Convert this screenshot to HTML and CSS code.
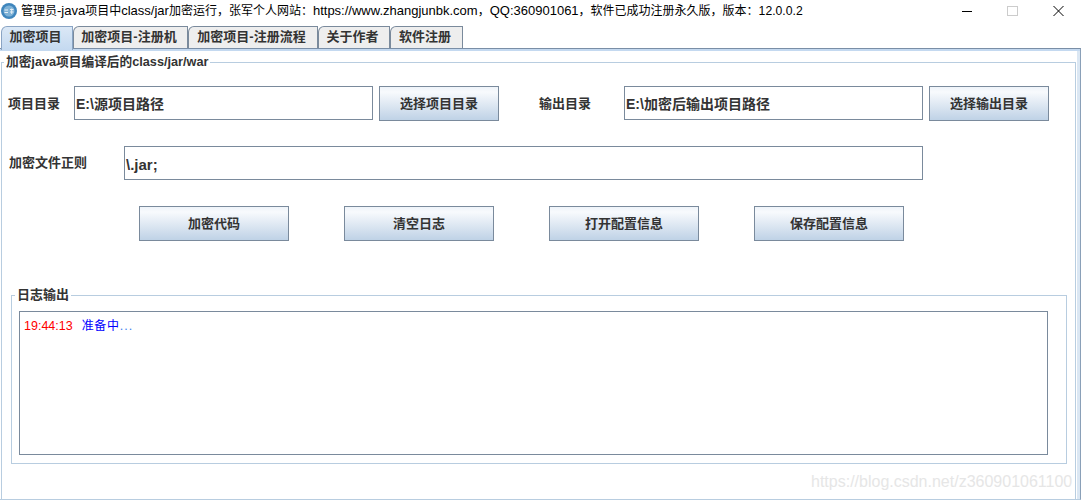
FILE: index.html
```html
<!DOCTYPE html>
<html lang="zh">
<head>
<meta charset="utf-8">
<title>管理员-java项目</title>
<link rel="stylesheet" href="styles.css">
</head>
<body>
<div class="window">
  <header class="titlebar">
    <svg class="app-icon" width="16" height="16" viewBox="0 0 16 16"><circle cx="8" cy="8" r="8" fill="#3f86bd"/><circle cx="8" cy="8" r="5.5" fill="#7fb2d6"/><path d="M3.5 7H7M3.5 9.5H7M9 6.5H12.5M9 9H12.5M10.7 5.5V11" stroke="#e6eff6" stroke-width="1"/></svg>
    <span class="title-text"><span class="cjk">管理员</span>-java<span class="cjk">项目中</span>class/jar<span class="cjk">加密运行，张军个人网站：</span>https://www.zhangjunbk.com<span class="cjk">，</span>QQ:360901061<span class="cjk">，软件已成功注册永久版，版本：</span><span class="ver">12.0.0.2</span></span>
    <div class="controls">
      <svg width="12" height="12" viewBox="0 0 12 12"><path d="M1 6.5H11" stroke="#000" stroke-width="1"/></svg>
      <svg width="12" height="12" viewBox="0 0 12 12"><rect x="0.5" y="1.5" width="10" height="9" fill="none" stroke="#ccc"/></svg>
      <svg width="12" height="12" viewBox="0 0 12 12"><path d="M0.5 1L10.5 11M10.5 1L0.5 11" stroke="#000" stroke-width="1"/></svg>
    </div>
  </header>
  <nav class="tabs">
    <div class="tab tab-active w72">加密项目</div>
    <div class="tab w115">加密项目-注册机</div>
    <div class="tab w130">加密项目-注册流程</div>
    <div class="tab w72">关于作者</div>
    <div class="tab w73">软件注册</div>
  </nav>
  <main class="panel">
    <fieldset class="group main-group">
      <legend>加密java项目编译后的class/jar/war</legend>
      <div class="row row-one">
        <label class="label label-a">项目目录</label>
        <div class="input input-a">E:\源项目路径</div>
        <button class="btn btn-s">选择项目目录</button>
        <label class="label label-b">输出目录</label>
        <div class="input input-a">E:\加密后输出项目路径</div>
        <button class="btn btn-s">选择输出目录</button>
      </div>
      <div class="row row-two">
        <label class="label label-c">加密文件正则</label>
        <div class="input input-c">\.jar;</div>
      </div>
      <div class="row row-three">
        <button class="btn btn-l">加密代码</button>
        <button class="btn btn-l">清空日志</button>
        <button class="btn btn-l">打开配置信息</button>
        <button class="btn btn-l">保存配置信息</button>
      </div>
      <fieldset class="group log-group">
        <legend>日志输出</legend>
        <div class="log">
          <span class="time">19:44:13</span><span class="msg">准备中</span><span class="dots">...</span>
        </div>
      </fieldset>
    </fieldset>
  </main>
  <div class="watermark">https://blog.csdn.net/z360901061100</div>
</div>
</body>
</html>
```

FILE: styles.css
```css
* { box-sizing: border-box; }
html, body { margin: 0; padding: 0; background: #fff; }
body { font-family: "Liberation Sans", "Noto Sans CJK SC", sans-serif; color: #333; }
.window { position: relative; width: 1081px; height: 500px; overflow: hidden; }
.titlebar { height: 26px; display: flex; align-items: flex-start; padding: 3px 0 0 1px; }
.app-icon { flex: none; }
.title-text { margin-left: 4px; font-size: 13px; line-height: 16px; color: #000; white-space: nowrap; }
.cjk { font-size: 12px; }
.ver { font-size: 12.2px; }
.controls { margin-left: auto; display: flex; gap: 34px; padding: 2px 16px 0 0; }
.tabs { display: flex; height: 22px; padding-left: 1px; position: relative; z-index: 1; }
.tab { height: 22px; border: 1px solid #7a8a9c; border-bottom: 0; border-top-left-radius: 6px; background: #eeeeee; font-size: 13px; font-weight: bold; color: #333; line-height: 20px; text-align: center; padding-right: 3px; }
.tab-active { background: linear-gradient(#dbe8f6, #c4d9f0); border-color: #8aa4c4; height: 24px; }
.w72 { width: 72px; }
.w73 { width: 73px; }
.w115 { width: 115px; }
.w130 { width: 130px; }
.panel { height: 452px; border-top: 1px solid #7a8ea6; border-right: 1px solid #8aa0b8; border-bottom: 1px solid #b8cde0; background: #fff; padding: 2px 4px 0 1px; box-shadow: inset 0 2px 0 #c4d9f0, inset -3px 0 0 #dbe7f3; }
.group { margin: 0; border: 1px solid #b8cde0; min-width: 0; }
.group legend { font-size: 12.7px; font-weight: bold; color: #333; padding: 0 2px; line-height: 16px; }
.main-group { height: 448px; padding: 0; margin-top: 3px; }
.main-group > legend { margin-left: 2px; }
.row { display: flex; align-items: flex-start; }
.row-one { padding-top: 16px; height: 75px; }
.label { font-size: 13px; font-weight: bold; color: #333; white-space: nowrap; line-height: 35px; }
.label-a { width: 72px; padding-left: 6px; }
.label-b { width: 85px; margin-left: 40px; }
.label-c { width: 122px; padding-left: 7px; line-height: 33px; }
.input { height: 34px; border: 1px solid #7a8a9c; font-size: 14px; font-weight: bold; color: #333; line-height: 35px; padding-left: 1px; white-space: nowrap; }
.input-a { width: 299px; }
.input-c { width: 799px; font-size: 15px; }
.btn { height: 35px; margin: 0; padding: 0 0 2px; border: 1px solid #7a8a9c; background: linear-gradient(#eef3f9 0%, #f8fafd 15%, #bfd2e6 100%); font-family: inherit; font-size: 13px; font-weight: bold; color: #333; }
.btn-s { width: 120px; margin-left: 6px; }
.row-two { height: 61px; padding-top: 1px; }
.row-three { height: 81px; padding-left: 137px; gap: 55px; }
.btn-l { width: 150px; }
.log-group { width: 1056px; height: 177px; margin-left: 9px; padding: 0; }
.log-group > legend { margin-left: 3px; font-size: 13px; }
.log { width: 1029px; height: 144px; margin: 8px 0 0 7px; border: 1px solid #7a8a9c; padding: 6px 0 0 4px; font-size: 12.5px; line-height: 16px; }
.time { color: #f00; }
.msg { color: #00f; margin-left: 9px; font-size: 12px; letter-spacing: 0.7px; }
.dots { color: #3a80f0; letter-spacing: 1px; }
.watermark { position: absolute; left: 811px; top: 472px; font-size: 16px; line-height: 20px; color: #e6e6e6; white-space: nowrap; }
```
